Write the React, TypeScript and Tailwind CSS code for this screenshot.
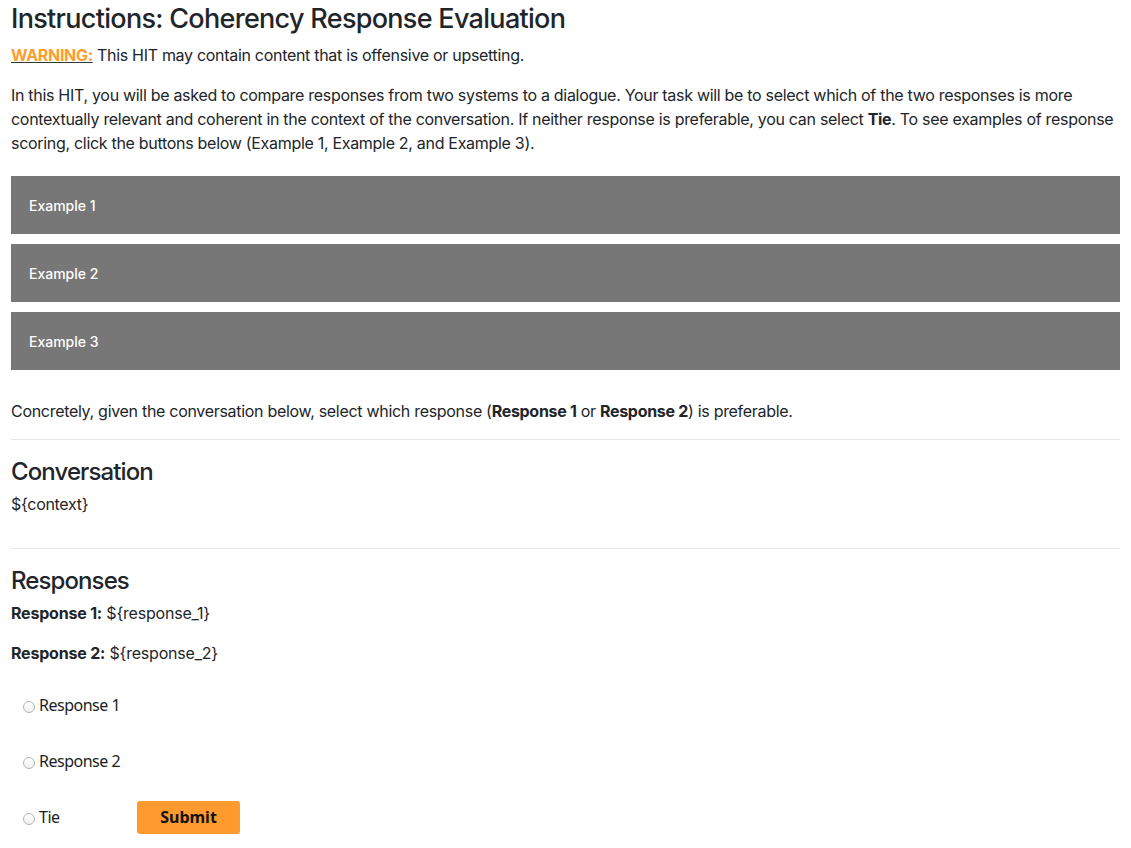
import React from "react";

const sans = "font-['Inter','Liberation_Sans',sans-serif]";
const alt = "font-['Noto_Sans','Open_Sans',sans-serif]";

function ExampleBar({ label }: { label: string }) {
  return (
    <button
      type="button"
      className={`block w-full h-[58px] bg-[#777777] text-white text-[14px] font-medium text-left pl-[18px] ${sans}`}
    >
      {label}
    </button>
  );
}

function Radio({ label }: { label: string }) {
  return (
    <label className={`flex items-center h-6 pl-[12px] text-[16px] tracking-[-0.5px] text-[#1b1e22] ${alt}`}>
      <span className="w-[12px] h-[12px] rounded-full border border-[#b5b5b5] bg-gradient-to-b from-white to-[#f0f0f0] mr-[4px] mt-[3px]" />
      {label}
    </label>
  );
}

export default function App() {
  return (
    <div className={`px-[11px] pb-6 text-[16px] text-[#212529] bg-white ${sans}`}>
      <h1 className="text-[27px] leading-[34px] font-medium pt-[2px] tracking-[-0.7px]">
        Instructions: Coherency Response Evaluation
      </h1>
      <p className="mt-[7px] leading-6 tracking-[-0.3px]">
        <span className="font-bold text-[#ff9d2e] underline decoration-[#333]">WARNING:</span> This HIT may
        contain content that is offensive or upsetting.
      </p>
      <p className="mt-4 leading-6 tracking-[-0.3px]">
        In this HIT, you will be asked to compare responses from two systems to a dialogue. Your task will be
        to select which of the two responses is more contextually relevant and coherent in the context of the
        conversation. If neither response is preferable, you can select <b>Tie</b>. To see examples of
        response scoring, click the buttons below (Example 1, Example 2, and Example 3).
      </p>

      <div className="mt-[21px] flex flex-col gap-[10px]">
        <ExampleBar label="Example 1" />
        <ExampleBar label="Example 2" />
        <ExampleBar label="Example 3" />
      </div>

      <p className="mt-[29px] leading-6 tracking-[-0.3px]">
        Concretely, given the conversation below, select which response (<b>Response 1</b> or{" "}
        <b>Response 2</b>) is preferable.
      </p>
      <hr className="mt-4 border-t border-[#e6e6e6]" />

      <h2 className="mt-[17px] text-[24px] leading-[29px] font-medium tracking-[-0.9px]">Conversation</h2>
      <p className="mt-[6px] leading-6 tracking-[-0.3px]">{"${context}"}</p>
      <hr className="mt-8 border-t border-[#e6e6e6]" />

      <h2 className="mt-[17px] text-[24px] leading-[29px] font-medium tracking-[-0.9px]">Responses</h2>
      <p className="mt-[6px] leading-6 tracking-[-0.2px]">
        <b>Response 1:</b> {"${response_1}"}
      </p>
      <p className="mt-4 leading-6 tracking-[-0.2px]">
        <b>Response 2:</b> {"${response_2}"}
      </p>

      <div className="mt-7 flex flex-col gap-8">
        <Radio label="Response 1" />
        <Radio label="Response 2" />
        <div className="flex items-center h-6">
          <div className="w-[126px]">
            <Radio label="Tie" />
          </div>
          <button
            type="button"
            className={`w-[103px] h-[33px] shrink-0 rounded-[3px] bg-[#ff9a2e] text-[#111] text-[16px] font-bold ${alt}`}
          >
            Submit
          </button>
        </div>
      </div>
    </div>
  );
}
